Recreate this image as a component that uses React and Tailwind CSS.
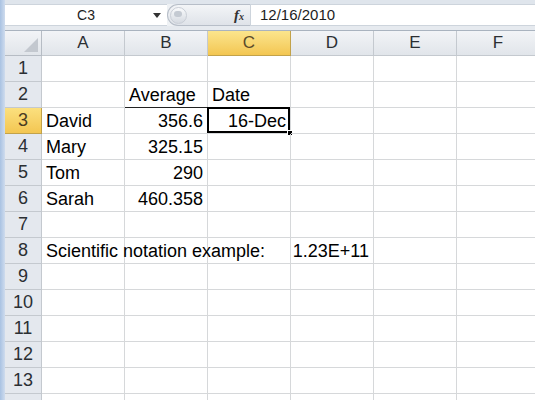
const cols = ["A", "B", "C", "D", "E", "F"];

// cell contents by row number
const data = {
  2: { B: { text: "Average", align: "left", underline: true }, C: { text: "Date", align: "left" } },
  3: { A: { text: "David" }, B: { text: "356.6", align: "right" }, C: { text: "16-Dec", align: "right" } },
  4: { A: { text: "Mary" }, B: { text: "325.15", align: "right" } },
  5: { A: { text: "Tom" }, B: { text: "290", align: "right" } },
  6: { A: { text: "Sarah" }, B: { text: "460.358", align: "right" } },
  8: { A: { text: "Scientific notation example:" }, D: { text: "1.23E+11", align: "right" } },
};

const rows = Array.from({ length: 14 }, (_, i) => i + 1);

function FormulaBar() {
  return (
    <div className="flex h-[22px] shrink-0 items-stretch bg-white">
      <div className="relative flex w-[162px] items-center justify-center border-y border-[#cdd4dc]">
        <span className="text-[14px] text-[#1d1d1d]">C3</span>
        <svg className="absolute right-[6px] top-[8px]" width="8" height="5" viewBox="0 0 8 5">
          <path d="M0 0 L8 0 L4 5 Z" fill="#333" />
        </svg>
      </div>
      <div className="flex w-[83px] items-stretch bg-[#eef1f4]">
        <div className="flex flex-1 items-center rounded-l-full border border-r-0 border-[#b7bec8] bg-gradient-to-b from-[#f3f5f7] to-[#dfe3e9]">
          <div className="ml-[2px] h-[17px] w-[17px] rounded-full border border-[#c9ced6] bg-gradient-to-b from-[#fafbfc] to-[#d5dae1] p-[3px]">
            <div className="h-[6px] w-[8px] rounded-full bg-[#c4cad2]" />
          </div>
          <div className="flex-1" />
          <span className="pr-[6px] font-['Liberation_Serif',serif] text-[15px] font-bold italic leading-none text-[#333]">
            f<span className="text-[10px]">x</span>
          </span>
        </div>
      </div>
      <div className="flex flex-1 items-center border-y border-l border-[#cdd4dc] pl-[9px]">
        <span className="text-[15px] text-[#1d1d1d]">12/16/2010</span>
      </div>
    </div>
  );
}

function Cell({ r, c }) {
  const cell = data[r]?.[c];
  const selected = r === 3 && c === "C";
  return (
    <div
      className={
        "relative h-[26px] border-r border-b " +
        (cell?.underline ? "border-r-[#d6d8da] border-b-[#222]" : "border-[#d6d8da]")
      }
    >
      {cell && (
        <div
          className={
            "absolute bottom-[1px] z-10 whitespace-nowrap text-[18px] leading-[22px] text-black " +
            (cell.align === "right" ? "right-[4px]" : "left-[4px]")
          }
        >
          {cell.text}
        </div>
      )}
      {selected && (
        <>
          <div className="absolute -left-[1px] -top-[1px] right-0 bottom-0 border-2 border-black" />
          <div className="absolute -bottom-[3px] -right-[3px] h-[6px] w-[6px] border border-white bg-black" />
        </>
      )}
    </div>
  );
}

function Row({ r }) {
  return (
    <>
      <div
        className={
          "flex h-[26px] items-center justify-center border-r border-b text-[18px] " +
          (r === 3
            ? "border-[#c2a24a] bg-gradient-to-b from-[#fbe07e] to-[#f3c651] text-[#4a3d22]"
            : "border-[#c4c9cf] bg-[#e4e8ee] text-[#2b2f33]")
        }
      >
        {r < 14 ? r : ""}
      </div>
      {cols.map((c) => (
        <Cell key={c} r={r} c={c} />
      ))}
    </>
  );
}

export default function App() {
  return (
    <div className="flex h-[400px] w-[535px] overflow-hidden bg-white font-['Liberation_Sans',sans-serif]">
      <div className="w-[5px] shrink-0 bg-gradient-to-r from-[#a9c2e2] to-[#cfdcee]" />
      <div className="flex min-w-0 flex-1 flex-col">
        <div className="h-[4px] shrink-0 bg-[#dfe5ec]" />
        <FormulaBar />
        <div className="h-[4px] shrink-0 bg-[#e6eaef]" />
        <div className="grid shrink-0 grid-cols-[37px_83px_83px_83px_83px_83px_83px] border-t border-[#a9b3bf]">
          {/* header row */}
          <div className="relative h-[25px] border-r border-b border-[#b6bcc4] bg-gradient-to-b from-[#f2f4f7] to-[#e1e5ea]">
            <svg className="absolute bottom-[3px] right-[3px]" width="14" height="14" viewBox="0 0 14 14">
              <path d="M14 0 L14 14 L0 14 Z" fill="#c3c8cf" />
            </svg>
          </div>
          {cols.map((c) => (
            <div
              key={c}
              className={
                "flex h-[25px] items-center justify-center border-r border-b text-[17px] " +
                (c === "C"
                  ? "border-[#c2a24a] bg-gradient-to-b from-[#fbe58c] to-[#f3c651] text-[#5b4b2a]"
                  : "border-[#c4c9cf] bg-gradient-to-b from-[#f2f4f7] to-[#e1e5ea] text-[#2b2f33]")
              }
            >
              {c}
            </div>
          ))}
          {rows.map((r) => (
            <Row key={r} r={r} />
          ))}
        </div>
      </div>
    </div>
  );
}
